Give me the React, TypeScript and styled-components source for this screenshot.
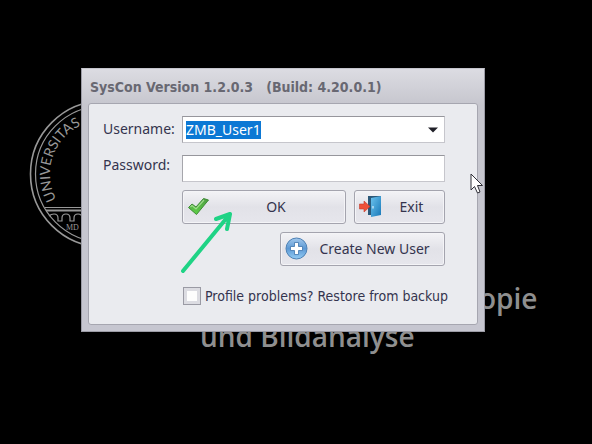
import React, { useEffect, useRef } from "react";
import styled, { createGlobalStyle } from "styled-components";

const GlobalStyle = createGlobalStyle`
  *, *::before, *::after { box-sizing: border-box; }
  body { margin: 0; background: #000; }
`;

const uiFont = `"Noto Sans", "Open Sans", sans-serif`;
const condensedFont = `"DejaVu Sans Condensed", "Noto Sans", sans-serif`;

const Desktop = styled.main`
  position: relative;
  min-height: 100vh;
  overflow: hidden;
  padding: 68px 107px 100px 81px;
  background: #000;
  font: 14px/20px ${uiFont};
  color: #34344e;
`;

const Seal = styled.svg`
  position: absolute;
  left: 28px;
  top: 98px;
`;

const Wallpaper = styled.p<{ $left: number; $top: number }>`
  position: absolute;
  left: ${(p) => p.$left}px;
  top: ${(p) => p.$top}px;
  margin: 0;
  font: 600 28px/38px "Open Sans", sans-serif;
  color: #8f8f8f;
  white-space: nowrap;
`;

const Dialog = styled.section`
  position: relative;
  padding: 0 6px 6px;
  border: 1px solid #9c9ca6;
  border-top-color: #c4c4cc;
  background: linear-gradient(#dcdce2, #c6c6ce 36px, #c6c6d0);
`;

const Title = styled.h1`
  margin: 0;
  padding: 8px 2px 6px;
  font: 700 14px/20px ${condensedFont};
  color: #686872;
  white-space: pre;
`;

const Form = styled.form`
  display: grid;
  grid-template-columns: 72px minmax(0, 1fr);
  column-gap: 7px;
  row-gap: 8px;
  padding: 12px 32px 18px 14px;
  border: 1px solid #a6a6b0;
  border-radius: 3px;
  background: #eaebef;
`;

const Label = styled.label<{ $line: number }>`
  line-height: ${(p) => p.$line}px;
  white-space: nowrap;
`;

const Field = styled.div<{ $gap?: number }>`
  display: flex;
  height: 27px;
  margin-bottom: ${(p) => p.$gap ?? 0}px;
  border: 1px solid #c6c6cc;
  border-top-color: #96969c;
  border-left-color: #a6a6ac;
  background: #fff;
`;

const TextInput = styled.input`
  flex: 1;
  min-width: 0;
  padding: 0 3px;
  border: 0;
  outline: 0;
  background: transparent;
  font: 14px/18px ${uiFont};
  color: #34344e;
  caret-color: transparent;
  &::selection { background: #0c78d4; color: #fff; }
`;

const DropButton = styled.button`
  display: grid;
  place-items: center;
  width: 22px;
  padding: 0;
  border: 0;
  background: transparent;
`;

const Actions = styled.div`
  grid-column: 2;
  display: flex;
  justify-content: flex-end;
  gap: 8px;
`;

const ActionButton = styled.button<{ $grow?: boolean; $width?: number }>`
  display: flex;
  align-items: center;
  flex: ${(p) => (p.$grow ? "1" : "none")};
  width: ${(p) => (p.$width ? p.$width + "px" : "auto")};
  height: 34px;
  padding: 0 4px;
  border: 1px solid #a4a4ae;
  border-radius: 3px;
  background: linear-gradient(#f3f3f6, #e2e2e8 50%, #e6e6ec);
  box-shadow: inset 0 0 0 1px #f4f4f7;
  font: 14px/20px ${uiFont};
  color: #34344e;
  white-space: nowrap;
`;

const Caption = styled.span`
  flex: 1;
  text-align: center;
`;

const CheckRow = styled.label`
  grid-column: 2;
  display: flex;
  align-items: center;
  gap: 4px;
  margin-top: 12px;
  padding-left: 1px;
  font-family: ${condensedFont};
  white-space: nowrap;
`;

const Check = styled.input`
  appearance: none;
  flex: none;
  width: 18px;
  height: 18px;
  margin: 0;
  border: 1px solid #9a9aa4;
  background: #fdfdfd;
  box-shadow: inset 0 0 0 3px #dcdce2;
`;

const Overlay = styled.svg<{ $left: number; $top: number }>`
  position: absolute;
  left: ${(p) => p.$left}px;
  top: ${(p) => p.$top}px;
  pointer-events: none;
`;

function UniversitySeal() {
  return (
    <Seal width="152" height="152" viewBox="28 98 152 152" fill="none" stroke="#989898" aria-hidden="true">
      <circle cx="103.500" cy="174" r="73" strokeWidth="1.600" />
      <circle cx="103.500" cy="174" r="68" strokeWidth="1.200" />
      <path d="M45 207.500H90" strokeWidth="1" />
      <path d="M46 210.500H90" strokeWidth="1.800" />
      <path
        d="M49 216Q51 214 54 214Q58 214 58 218V221H62V218Q62 214 66 214Q70 214 70 218V221H74V218Q74 214 78 214Q82 214 82 218V221"
        strokeWidth="1.200"
      />
      <path id="sealArc" d="M60.200 205.500A53.500 53.500 0 0 1 103.500 120.500" stroke="none" />
      <text fill="#989898" stroke="none" fontFamily="Lato, sans-serif" fontSize="14">
        <textPath href="#sealArc" startOffset="7">UNIVERSITAS</textPath>
      </text>
      <text x="66" y="230" fill="#989898" stroke="none" fontFamily="Liberation Serif, serif" fontSize="8">MD</text>
    </Seal>
  );
}

function CheckIcon() {
  return (
    <svg width="24" height="24" viewBox="0 0 24 24" aria-hidden="true">
      <defs>
        <linearGradient id="leaf" x1="0" y1="0" x2="0" y2="1">
          <stop offset="0" stopColor="#4f9c44" />
          <stop offset="1" stopColor="#5ed246" />
        </linearGradient>
      </defs>
      <path d="M1.500 12.500L5 9L9 12L16.500 3.500L21.500 5L9.500 19.500Z" fill="url(#leaf)" stroke="#3e8a36" strokeLinejoin="round" />
      <path d="M3.500 12L5 10.500L9 14L17 5" fill="none" stroke="#a0dc8c" strokeWidth="1.200" />
    </svg>
  );
}

function ExitIcon() {
  return (
    <svg width="24" height="24" viewBox="0 0 24 24" aria-hidden="true">
      <defs>
        <linearGradient id="door" x1="0" y1="0" x2="1" y2="1">
          <stop offset="0" stopColor="#6cc3ee" />
          <stop offset="1" stopColor="#1878b8" />
        </linearGradient>
      </defs>
      <path d="M9 1H22V20H9Z" fill="#2b5878" />
      <path d="M12 3L22 1V20L12 22Z" fill="url(#door)" />
      <path d="M14 11V13.500" stroke="#d8f0fc" strokeWidth="1.200" />
      <path d="M0.500 9H5V6L11 11.500L5 17V14H0.500Z" fill="#ee5038" stroke="#c43a2c" strokeWidth=".6" />
    </svg>
  );
}

function PlusIcon() {
  return (
    <svg width="24" height="24" viewBox="0 0 24 24" aria-hidden="true">
      <defs>
        <linearGradient id="disc" x1="0" y1="0" x2="0" y2="1">
          <stop offset="0" stopColor="#a2c8ec" />
          <stop offset="0.500" stopColor="#5c98d4" />
          <stop offset="1" stopColor="#94ccf4" />
        </linearGradient>
      </defs>
      <circle cx="11.500" cy="11.500" r="10.500" fill="url(#disc)" stroke="#4c80b4" />
      <path d="M9.500 5.500H13.500V9.500H17.500V13.500H13.500V17.500H9.500V13.500H5.500V9.500H9.500Z" fill="#fff" stroke="#3d74ac" strokeWidth=".8" />
    </svg>
  );
}

export default function App() {
  const userRef = useRef<HTMLInputElement>(null);

  useEffect(() => {
    userRef.current?.focus();
    userRef.current?.select();
  }, []);

  return (
    <>
      <GlobalStyle />
      <Desktop>
        <UniversitySeal />
        <Wallpaper $left={479} $top={279}>opie</Wallpaper>
        <Wallpaper $left={200} $top={317}>und Bildanalyse</Wallpaper>
        <Dialog aria-labelledby="dialog-title">
          <Title id="dialog-title">{"SysCon Version 1.2.0.3   (Build: 4.20.0.1)"}</Title>
          <Form onSubmit={(e) => e.preventDefault()}>
            <Label htmlFor="username" $line={26}>Username:</Label>
            <Field $gap={4}>
              <TextInput id="username" ref={userRef} defaultValue="ZMB_User1" autoComplete="off" spellCheck={false} />
              <DropButton type="button" aria-label="Show users">
                <svg width="10" height="6" viewBox="0 0 10 6" aria-hidden="true">
                  <path d="M0 0.500H10L5 5.500Z" fill="#202028" />
                </svg>
              </DropButton>
            </Field>
            <Label htmlFor="password" $line={20}>Password:</Label>
            <Field>
              <TextInput id="password" type="password" />
            </Field>
            <Actions>
              <ActionButton type="submit" $grow>
                <CheckIcon />
                <Caption>OK</Caption>
              </ActionButton>
              <ActionButton type="button" $width={91}>
                <ExitIcon />
                <Caption>Exit</Caption>
              </ActionButton>
            </Actions>
            <Actions>
              <ActionButton type="button" $width={165}>
                <PlusIcon />
                <Caption>Create New User</Caption>
              </ActionButton>
            </Actions>
            <CheckRow>
              <Check type="checkbox" />
              Profile problems? Restore from backup
            </CheckRow>
          </Form>
        </Dialog>
        <Overlay $left={178} $top={206} width="60" height="70" viewBox="178 206 60 70" aria-hidden="true">
          <path d="M183 271L230 214M216 219L230 214L227 229" fill="none" stroke="#1fd385" strokeWidth="4" strokeLinecap="round" strokeLinejoin="round" />
        </Overlay>
        <Overlay $left={470} $top={173} width="16" height="22" viewBox="0 0 16 22" aria-hidden="true">
          <path d="M1 1V17L4.500 13.500L7.500 20L10 19L7.500 12.500H12.500Z" fill="#fff" stroke="#303038" strokeLinejoin="round" />
        </Overlay>
      </Desktop>
    </>
  );
}
